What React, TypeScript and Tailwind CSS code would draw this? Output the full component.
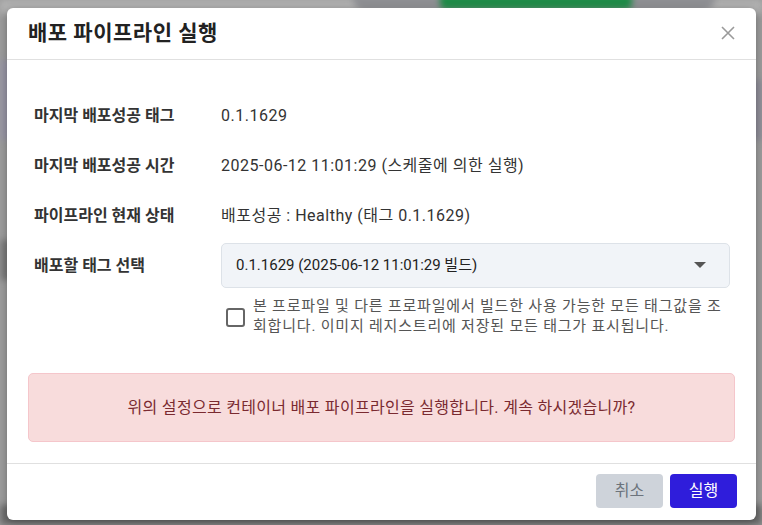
import React from "react";

const font = { fontFamily: 'Roboto, "Noto Sans CJK KR", sans-serif' };

function Row({ label, children }: { label: string; children: React.ReactNode }) {
  return (
    <div className="flex items-center h-[50px]">
      <div className="w-[187px] shrink-0 text-[16px] font-bold text-[#333]">{label}</div>
      <div className="text-[16px] text-[#333] tracking-[0.5px]">{children}</div>
    </div>
  );
}

export default function App() {
  return (
    <div className="relative w-[762px] h-[525px] overflow-hidden bg-[#9c9c9c]" style={font}>
      {/* blurred backdrop */}
      <div className="absolute inset-0 blur-[3px]">
        <div className="absolute left-0 top-0 w-full h-[14px] bg-[#b2b2b2]" />
        <div className="absolute left-[352px] top-[-20px] w-[364px] h-[30px] rounded-[14px] bg-[#8e8f93]" />
        <div className="absolute left-[440px] top-[-20px] w-[192px] h-[30px] rounded-[6px] bg-[#1f8b48]" />
        <div className="absolute left-[0px] top-[60px] w-[14px] h-[80px] bg-[#9896a6]" />
        <div className="absolute left-[0px] top-[240px] w-[14px] h-[40px] bg-[#7a7a7a]" />
        <div className="absolute left-0 bottom-0 w-full h-[20px] bg-[#6c6c6c]" />
        <div className="absolute right-0 top-[80px] w-[10px] h-[60px] bg-[#8d8c98]" />
      </div>

      <div className="relative pl-[7px] pt-[8px]">
        <div className="w-[749px] h-[512px] bg-white rounded-[6px] shadow-[0_2px_8px_rgba(0,0,0,0.3)] flex flex-col">
          {/* header */}
          <div className="h-[52px] flex items-center justify-between pl-[21px] pr-[21px] border-b border-[#e0e0e0]">
            <div className="text-[21px] font-bold text-[#222] tracking-[0.5px]">배포 파이프라인 실행</div>
            <svg width="16" height="16" viewBox="0 0 16 16" className="mr-[-1px] mb-[1px]">
              <path d="M2 2 L14 14 M14 2 L2 14" stroke="#9a9a9a" strokeWidth="1.6" />
            </svg>
          </div>

          {/* body */}
          <div className="flex-1 px-[21px] pt-[31px]">
            <div className="pl-[6px]">
              <Row label="마지막 배포성공 태그">0.1.1629</Row>
              <Row label="마지막 배포성공 시간">2025-06-12 11:01:29 (스케줄에 의한 실행)</Row>
              <Row label="파이프라인 현재 상태">배포성공 : Healthy (태그 0.1.1629)</Row>
              <div className="flex items-center h-[50px]">
                <div className="w-[187px] shrink-0 text-[16px] font-bold text-[#333]">배포할 태그 선택</div>
                <div className="w-[509px] h-[45px] mt-[-2px] rounded-[5px] border border-[#dde2e8] bg-[#f1f4f8] flex items-center justify-between pl-[14px] pr-[22px]">
                  <span className="text-[15px] text-[#222]">0.1.1629 (2025-06-12 11:01:29 빌드)</span>
                  <svg width="14" height="8" viewBox="0 0 14 8">
                    <path d="M1 1 L13 1 L7 7 Z" fill="#555" />
                  </svg>
                </div>
              </div>
              <div className="flex items-start pl-[192px] mt-[5px]">
                <div className="w-[19px] h-[19px] border-2 border-[#666] rounded-[3px] mt-[12px] shrink-0" />
                <div className="ml-[8px] text-[15px] leading-[20px] text-[#555] tracking-[0.8px] whitespace-nowrap">
                  본 프로파일 및 다른 프로파일에서 빌드한 사용 가능한 모든 태그값을 조<br />
                  회합니다. 이미지 레지스트리에 저장된 모든 태그가 표시됩니다.
                </div>
              </div>
            </div>

            <div className="mt-[37px] h-[69px] rounded-[5px] border border-[#f5c6cb] bg-[#f8dcdc] flex items-center justify-center text-[16px] tracking-[0.3px] text-[#7a2a30]">
              위의 설정으로 컨테이너 배포 파이프라인을 실행합니다. 계속 하시겠습니까?
            </div>
          </div>

          {/* footer */}
          <div className="h-[57px] border-t border-[#e0e0e0] flex items-center justify-end gap-[7px] pr-[19px] pb-[2px]">
            <button className="w-[67px] h-[34px] rounded-[4px] bg-[#ced3da] text-[#6c737c] text-[16px]">취소</button>
            <button className="w-[67px] h-[34px] rounded-[4px] bg-[#2f1ddb] text-white text-[16px]">실행</button>
          </div>
        </div>
      </div>
    </div>
  );
}
